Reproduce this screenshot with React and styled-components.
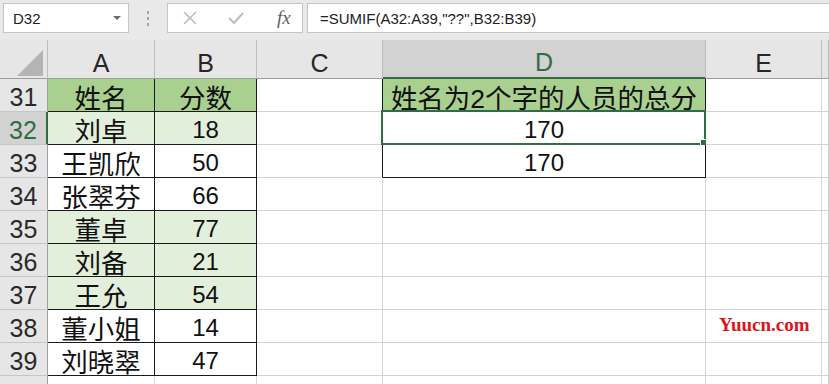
import React from "react";
import styled, { createGlobalStyle } from "styled-components";

const GlobalStyle = createGlobalStyle`
  html, body {
    margin: 0;
    padding: 0;
    background: #ffffff;
    overflow: hidden;
  }
  body {
    font-family: "Liberation Sans", "Noto Sans CJK SC", sans-serif;
  }
`;

const GRID = "#d4d4d4";
const BLACK = "#1a1a1a";
const SEL = "#2f6e45";

const Page = styled.div`
  width: 829px;
  height: 384px;
  position: relative;
  overflow: hidden;
`;

const Toolbar = styled.div`
  display: flex;
  align-items: flex-start;
  height: 40px;
  padding-top: 3px;
  box-sizing: border-box;
  background: #e9e9e9;
`;

const NameBox = styled.div`
  margin-left: 3px;
  width: 126px;
  height: 30px;
  box-sizing: border-box;
  background: #fff;
  border: 1px solid #c6c6c6;
  display: flex;
  align-items: center;
  justify-content: space-between;
  padding: 0 7px 0 9px;
  font-size: 15px;
  color: #222;
`;

const Caret = styled.span`
  width: 0;
  height: 0;
  border-left: 4px solid transparent;
  border-right: 4px solid transparent;
  border-top: 4px solid #6a6a6a;
`;

const Dots = styled.div`
  width: 38px;
  height: 30px;
  display: flex;
  flex-direction: column;
  align-items: center;
  justify-content: center;
  gap: 3px;
  & span {
    width: 2px;
    height: 3px;
    background: #a4a4a4;
  }
`;

const FxBox = styled.div`
  width: 136px;
  height: 30px;
  box-sizing: border-box;
  background: #fff;
  border: 1px solid #c6c6c6;
  display: flex;
  align-items: center;
  padding-left: 15px;
  gap: 31px;
`;

const Fx = styled.span`
  font-family: "Liberation Serif", serif;
  font-style: italic;
  font-size: 19px;
  color: #5e5e5e;
  margin-left: 2px;
`;

const FormulaBox = styled.div`
  margin-left: 4px;
  flex: 1;
  height: 30px;
  box-sizing: border-box;
  background: #fff;
  border: 1px solid #c6c6c6;
  border-right: none;
  display: flex;
  align-items: center;
  padding-left: 12px;
  font-size: 15px;
  color: #222;
`;

const Sheet = styled.div`
  display: grid;
  grid-template-columns: 48px 107px 102px 126px 323px 116px 1fr;
  grid-auto-rows: 33px;
  grid-template-rows: 39px;
`;

const Corner = styled.div`
  background: #e6e6e6;
  border-right: 1px solid #bdbdbd;
  border-bottom: 1px solid #9e9e9e;
  box-sizing: border-box;
  display: flex;
  align-items: flex-end;
  justify-content: flex-end;
  padding: 0 4px 2px 0;
`;

const ColHead = styled.div`
  box-sizing: border-box;
  background: ${(p) => (p.$sel ? "#d2d2d2" : "#e6e6e6")};
  color: ${(p) => (p.$sel ? SEL : "#262626")};
  border-right: 1px solid #bdbdbd;
  border-bottom: ${(p) => (p.$sel ? `2px solid ${SEL}` : "1px solid #9e9e9e")};
  display: flex;
  align-items: center;
  justify-content: center;
  padding-top: 8px;
  font-size: 25px;
`;

const RowHead = styled.div`
  box-sizing: border-box;
  background: ${(p) => (p.$sel ? "#d2d2d2" : "#e6e6e6")};
  color: ${(p) => (p.$sel ? SEL : "#2a2a2a")};
  border-right: ${(p) => (p.$sel ? `2px solid ${SEL}` : "1px solid #9e9e9e")};
  border-bottom: 1px solid #c6c6c6;
  display: flex;
  align-items: center;
  justify-content: center;
  padding-top: 4px;
  font-size: 25px;
`;

const Cell = styled.div`
  position: relative;
  box-sizing: border-box;
  background: ${(p) => p.$bg || "#fff"};
  border-right: 1px solid ${(p) => p.$r || GRID};
  border-bottom: 1px solid ${(p) => p.$b || GRID};
  display: flex;
  align-items: center;
  justify-content: center;
  padding-top: 3px;
  font-size: ${(p) => (p.$cjk ? "26.5px" : "24px")};
  color: #111;
  white-space: nowrap;
`;

const Selection = styled.div`
  position: absolute;
  left: -2px;
  top: -2px;
  right: -1px;
  bottom: -1px;
  border: 2px solid ${SEL};
  pointer-events: none;
  &::after {
    content: "";
    position: absolute;
    right: -4px;
    bottom: -4px;
    width: 6px;
    height: 6px;
    background: ${SEL};
    border: 1px solid #fff;
  }
`;

const Watermark = styled.div`
  position: absolute;
  left: 719px;
  top: 314px;
  font-family: "Liberation Serif", serif;
  font-weight: bold;
  font-size: 19px;
  color: #d9161c;
`;

const HEAD = "#a9d08e";
const LIGHT = "#e2efda";

const rows = [
  { n: 31, a: "姓名", b: "分数", bg: HEAD, d: "姓名为2个字的人员的总分" },
  { n: 32, a: "刘卓", b: "18", bg: LIGHT, d: "170", sel: true },
  { n: 33, a: "王凯欣", b: "50", d: "170" },
  { n: 34, a: "张翠芬", b: "66" },
  { n: 35, a: "董卓", b: "77", bg: LIGHT },
  { n: 36, a: "刘备", b: "21", bg: LIGHT },
  { n: 37, a: "王允", b: "54", bg: LIGHT },
  { n: 38, a: "董小姐", b: "14" },
  { n: 39, a: "刘晓翠", b: "47" },
  { n: 40, hidden: true },
];

const columns = ["A", "B", "C", "D", "E", ""];

const App = () => {
  return (
    <Page>
      <GlobalStyle />
      <Toolbar>
        <NameBox>
          D32
          <Caret />
        </NameBox>
        <Dots>
          <span />
          <span />
          <span />
        </Dots>
        <FxBox>
          <svg width="14" height="14" viewBox="0 0 14 14">
            <path d="M1 1 L13 13 M13 1 L1 13" stroke="#bdbdbd" strokeWidth="1.6" fill="none" />
          </svg>
          <svg width="16" height="13" viewBox="0 0 16 13">
            <path d="M1 6 L6 11 L15 1" stroke="#bdbdbd" strokeWidth="2" fill="none" />
          </svg>
          <Fx>fx</Fx>
        </FxBox>
        <FormulaBox>=SUMIF(A32:A39,"??",B32:B39)</FormulaBox>
      </Toolbar>

      <Sheet>
        <Corner>
          <svg width="26" height="26" viewBox="0 0 26 26">
            <path d="M26 0 L26 26 L0 26 Z" fill="#b4b4b4" />
          </svg>
        </Corner>
        {columns.map((c) => (
          <ColHead key={c || "f"} $sel={c === "D"}>
            {c}
          </ColHead>
        ))}

        {rows.map((r) => {
          const inTable = r.n <= 39;
          const inSum = r.n <= 33;
          return (
            <React.Fragment key={r.n}>
              <RowHead $sel={r.sel}>{r.hidden ? "" : r.n}</RowHead>
              <Cell $bg={r.bg} $cjk $r={inTable && BLACK} $b={inTable && BLACK}>
                {r.a}
              </Cell>
              <Cell $bg={r.bg} $cjk={r.n === 31} $r={inTable && BLACK} $b={inTable && BLACK}>
                {r.b}
              </Cell>
              <Cell $r={inSum && BLACK} />
              <Cell
                $bg={r.n === 31 ? HEAD : undefined}
                $cjk={r.n === 31}
                $r={inSum && BLACK}
                $b={inSum && BLACK}
              >
                {r.d}
                {r.sel && <Selection />}
              </Cell>
              <Cell />
              <Cell />
            </React.Fragment>
          );
        })}
      </Sheet>

      <Watermark>Yuucn.com</Watermark>
    </Page>
  );
};

export default App;
